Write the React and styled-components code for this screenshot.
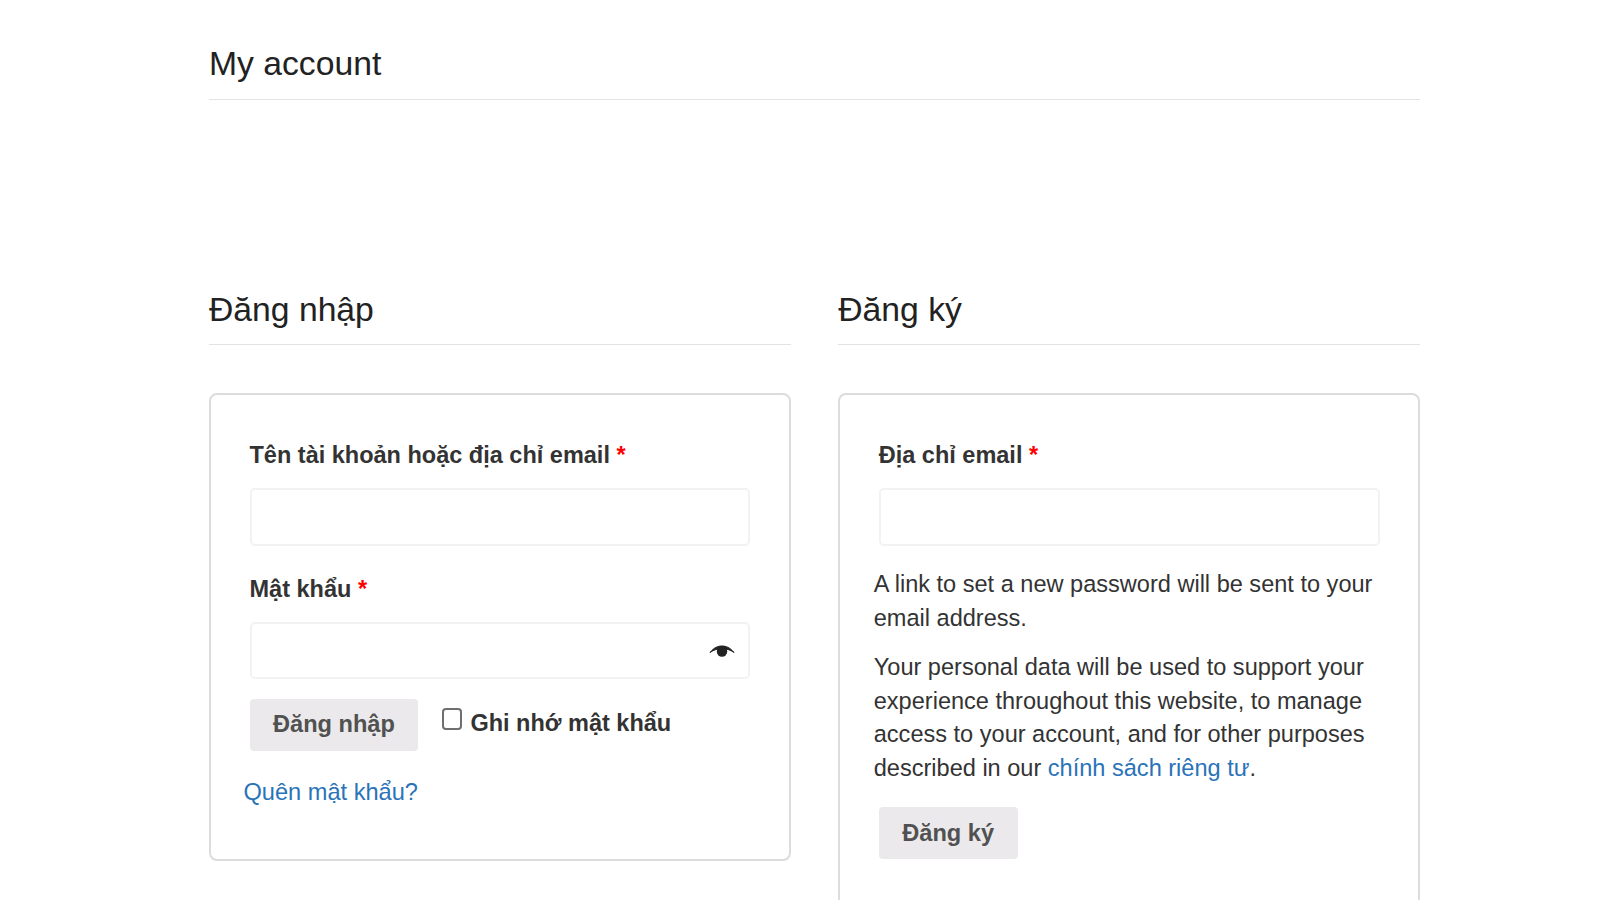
import React from "react";
import styled, { createGlobalStyle } from "styled-components";

const Global = createGlobalStyle`
  html, body { margin: 0; padding: 0; background: #fff; }
  body { font-family: "Liberation Sans", Arial, sans-serif; color: #333; overflow: hidden; height: 900px; }
`;

const Page = styled.main`
  width: 1211px;
  margin: 0 0 0 209px;
  padding-top: 41px;
`;

const Title = styled.h1`
  margin: 0;
  height: 58px;
  font-size: 33.7px;
  line-height: 44px;
  font-weight: 400;
  color: #222;
  border-bottom: 1px solid #e3e3e3;
`;

const Columns = styled.div`
  display: grid;
  grid-template-columns: 581.75px 581.75px;
  column-gap: 47.5px;
  margin-top: 187px;
`;

const Column = styled.section`
  min-width: 0;
`;

const Heading = styled.h2`
  margin: 0 0 48px;
  height: 57px;
  font-size: 33.7px;
  line-height: 44px;
  font-weight: 400;
  color: #222;
  border-bottom: 1px solid #e3e3e3;
`;

const Card = styled.form`
  box-sizing: border-box;
  border: 2px solid #dcdcdc;
  border-radius: 8px;
  padding: 40px 38.5px 0 38.5px;
  height: ${p => p.$height}px;
`;

const Label = styled.label`
  display: block;
  font-size: 23.5px;
  line-height: 40px;
  font-weight: 700;
  color: #333;
  margin-top: ${p => p.$top || 0}px;
  margin-bottom: 13px;
`;

const Required = styled.span`
  color: #f00;
`;

const InputWrap = styled.div`
  position: relative;
`;

const Input = styled.input`
  box-sizing: border-box;
  display: block;
  width: 100%;
  height: ${p => p.$height}px;
  border: 2px solid #f2f2f2;
  border-radius: 5px;
  background: #fff;
  outline: none;
`;

const EyeIcon = styled.svg`
  position: absolute;
  right: 15px;
  top: 22px;
  width: 26px;
  height: 16px;
`;

const LoginRow = styled.div`
  display: flex;
  align-items: flex-start;
  margin-top: ${p => p.$top}px;
`;

const Button = styled.button`
  height: 52px;
  padding: 0 ${p => p.$pad}px;
  border: 0;
  border-radius: 4px;
  background: #ebe9eb;
  color: #515151;
  font-family: inherit;
  font-size: 23.6px;
  font-weight: 700;
`;

const Remember = styled.label`
  display: flex;
  align-items: flex-start;
  margin-left: 24px;
  font-size: 23.5px;
  line-height: 48px;
  font-weight: 700;
  color: #333;
`;

const Check = styled.input`
  appearance: none;
  box-sizing: border-box;
  width: 20px;
  height: 22px;
  margin: 9px 8px 0 0;
  border: 2px solid #6f6f6f;
  border-radius: 4px;
  background: #fff;
`;

const Lost = styled.p`
  margin: 21px 0 0 -6px;
  font-size: 23.6px;
  line-height: 40px;
`;

const Link = styled.a`
  color: #2a73b8;
  text-decoration: none;
`;

const Text = styled.p`
  margin: ${p => p.$top}px -6px 0 -5px;
  font-size: 23.55px;
  line-height: 33.6px;
  color: #333;
`;

const Eye = () => (
  <EyeIcon viewBox="0 0 26 16" aria-hidden="true">
    <path d="M1 8.500C5 3.500 9 2 13 2s8 1.500 12 6.500C21 5.500 17 4.700 13 4.700S5 5.500 1 8.500Z" fill="#222" stroke="#222" strokeWidth="1" />
    <circle cx="13" cy="7.500" r="5.200" fill="#222" />
  </EyeIcon>
);

export default function App() {
  return (
    <>
      <Global />
      <Page>
        <Title>My account</Title>
        <Columns>
          <Column>
            <Heading>Đăng nhập</Heading>
            <Card $height={468}>
              <Label>Tên tài khoản hoặc địa chỉ email <Required>*</Required></Label>
              <Input type="text" $height={58} />
              <Label $top={22.5}>Mật khẩu <Required>*</Required></Label>
              <InputWrap>
                <Input type="password" $height={57} />
                <Eye />
              </InputWrap>
              <LoginRow $top={20}>
                <Button type="button" $pad={23.5}>Đăng nhập</Button>
                <Remember><Check type="checkbox" />Ghi nhớ mật khẩu</Remember>
              </LoginRow>
              <Lost><Link href="#">Quên mật khẩu?</Link></Lost>
            </Card>
          </Column>
          <Column>
            <Heading>Đăng ký</Heading>
            <Card $height={560}>
              <Label>Địa chỉ email <Required>*</Required></Label>
              <Input type="email" $height={58} />
              <Text $top={22}>A link to set a new password will be sent to your email address.</Text>
              <Text $top={16}>Your personal data will be used to support your experience throughout this website, to manage access to your account, and for other purposes described in our <Link href="#">chính sách riêng tư</Link>.</Text>
              <LoginRow $top={21.5}>
                <Button type="button" $pad={23.5}>Đăng ký</Button>
              </LoginRow>
            </Card>
          </Column>
        </Columns>
      </Page>
    </>
  );
}
